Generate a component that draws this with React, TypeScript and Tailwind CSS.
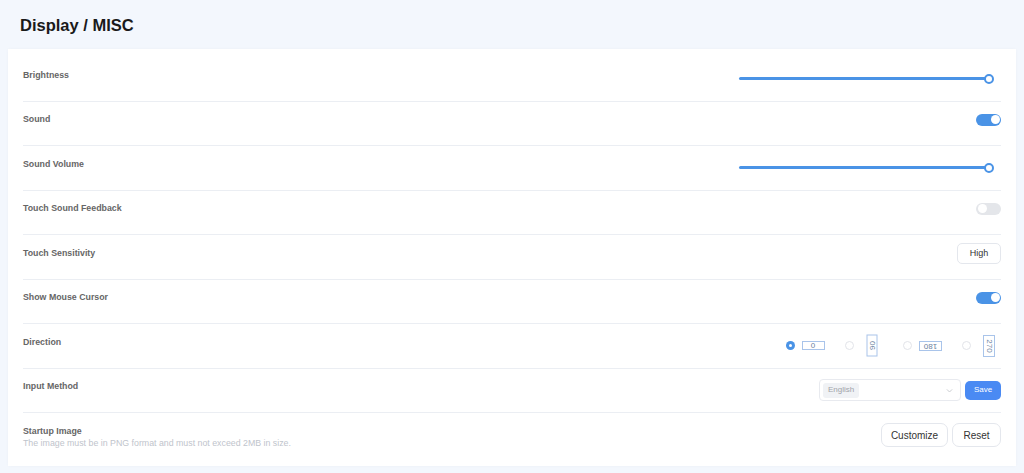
import React from "react";

function Slider() {
  return (
    <div className="relative w-[255px] h-[12px] flex items-center">
      <div className="h-[3px] w-[250px] rounded-full bg-[#4a93e6]" />
      <div className="absolute left-[245px] top-[1px] w-[10px] h-[10px] rounded-full bg-white border-2 border-[#4a93e6]" />
    </div>
  );
}

function Toggle({ on }: { on: boolean }) {
  return (
    <div
      className={
        on
          ? "w-[25px] h-[12px] rounded-full bg-[#4a93e6] flex items-center justify-end px-[1.5px]"
          : "w-[25px] h-[12px] rounded-full bg-[#e4e6ea] flex items-center justify-start px-[1.5px]"
      }
    >
      <div className="w-[9px] h-[9px] rounded-full bg-white" />
    </div>
  );
}

function Radio({ checked }: { checked: boolean }) {
  return checked ? (
    <div className="w-[9px] h-[9px] rounded-full bg-[#4a93e6] flex items-center justify-center">
      <div className="w-[3px] h-[3px] rounded-full bg-white" />
    </div>
  ) : (
    <div className="w-[9px] h-[9px] rounded-full border border-[#e2e4e9] bg-white" />
  );
}

const directions = [
  { value: "0", checked: true, box: "w-[23px] h-[9px]" },
  { value: "90", checked: false, box: "w-[22px] h-[11px] -rotate-90" },
  { value: "180", checked: false, box: "w-[23px] h-[10px] rotate-180" },
  { value: "270", checked: false, box: "w-[22px] h-[12px] rotate-90" },
];

function Row({ label, children }: { label: string; children?: React.ReactNode }) {
  return (
    <div className="flex items-center justify-between h-[44.5px] border-b border-[#ebeef3]">
      <div className="text-[8.8px] font-bold text-[#666] mb-[7px]">{label}</div>
      {children}
    </div>
  );
}

export default function App() {
  return (
    <main className="bg-[#f3f7fd] min-h-[473px] font-['Liberation_Sans',Arial,sans-serif]">
      {/* HEADER */}
      <div className="h-[49px] pl-5 pt-[1px] flex items-center">
        <h1 className="text-[16.5px] font-bold text-[#1a1a1a]">Display / MISC</h1>
      </div>

      {/* SETTINGS CARD */}
      <section className="mx-2 bg-white px-[15px] pt-[8px] pb-[8px] shadow-[0_0_3px_rgba(0,0,0,0.03)]">
        <Row label="Brightness">
          <div className="mr-[7px]">
            <Slider />
          </div>
        </Row>

        <Row label="Sound">
          <div className="mb-[7px]">
            <Toggle on />
          </div>
        </Row>

        <Row label="Sound Volume">
          <div className="mr-[7px]">
            <Slider />
          </div>
        </Row>

        <Row label="Touch Sound Feedback">
          <div className="mb-[7px]">
            <Toggle on={false} />
          </div>
        </Row>

        <Row label="Touch Sensitivity">
          <button className="mb-[7px] w-[44px] h-[21px] rounded-[5px] border border-[#e4e7ed] bg-white text-[9px] text-[#333]">
            High
          </button>
        </Row>

        <Row label="Show Mouse Cursor">
          <div className="mb-[7px]">
            <Toggle on />
          </div>
        </Row>

        <Row label="Direction">
          <div className="flex items-center gap-[20px] mr-[1px]">
            {directions.map((d) => (
              <div key={d.value} className="flex items-center gap-[6.5px]">
                <Radio checked={d.checked} />
                <div className="w-[23px] h-[23px] flex items-center justify-center">
                  <div
                    className={
                      "shrink-0 border border-[#a9c4ea] flex items-center justify-center text-[8px] leading-none text-[#6b7fa0] " +
                      d.box
                    }
                  >
                    {d.value}
                  </div>
                </div>
              </div>
            ))}
          </div>
        </Row>

        <Row label="Input Method">
          <div className="flex items-center gap-[4px]">
            <div className="w-[142px] h-[22px] rounded-[4px] border border-[#e8eaef] bg-white flex items-center justify-between pl-[3px] pr-[6px]">
              <span className="h-[15px] px-[5px] rounded-[3px] bg-[#f0f2f5] text-[8px] text-[#a0a3a9] flex items-center">
                English
              </span>
              <svg width="9" height="9" viewBox="0 0 12 12" fill="none">
                <path d="M2.5 4.5 L6 8 L9.5 4.5" stroke="#c4c7cc" strokeWidth="1.2" />
              </svg>
            </div>
            <button className="w-[36px] h-[19px] rounded-[5px] bg-[#4a8af3] text-white text-[8px]">
              Save
            </button>
          </div>
        </Row>

        <div className="flex items-center justify-between h-[45px]">
          <div className="mt-[2px]">
            <div className="text-[8.8px] font-bold text-[#666] leading-[12px]">Startup Image</div>
            <div className="text-[8.8px] text-[#c0c4cc] leading-[12px]">
              The image must be in PNG format and must not exceed 2MB in size.
            </div>
          </div>
          <div className="flex items-center gap-[4px] mb-[1px]">
            <button className="w-[67px] h-[24px] rounded-[7px] border border-[#e4e7ed] bg-white text-[10px] text-[#333]">
              Customize
            </button>
            <button className="w-[49px] h-[24px] rounded-[7px] border border-[#e4e7ed] bg-white text-[10px] text-[#333]">
              Reset
            </button>
          </div>
        </div>
      </section>
    </main>
  );
}
